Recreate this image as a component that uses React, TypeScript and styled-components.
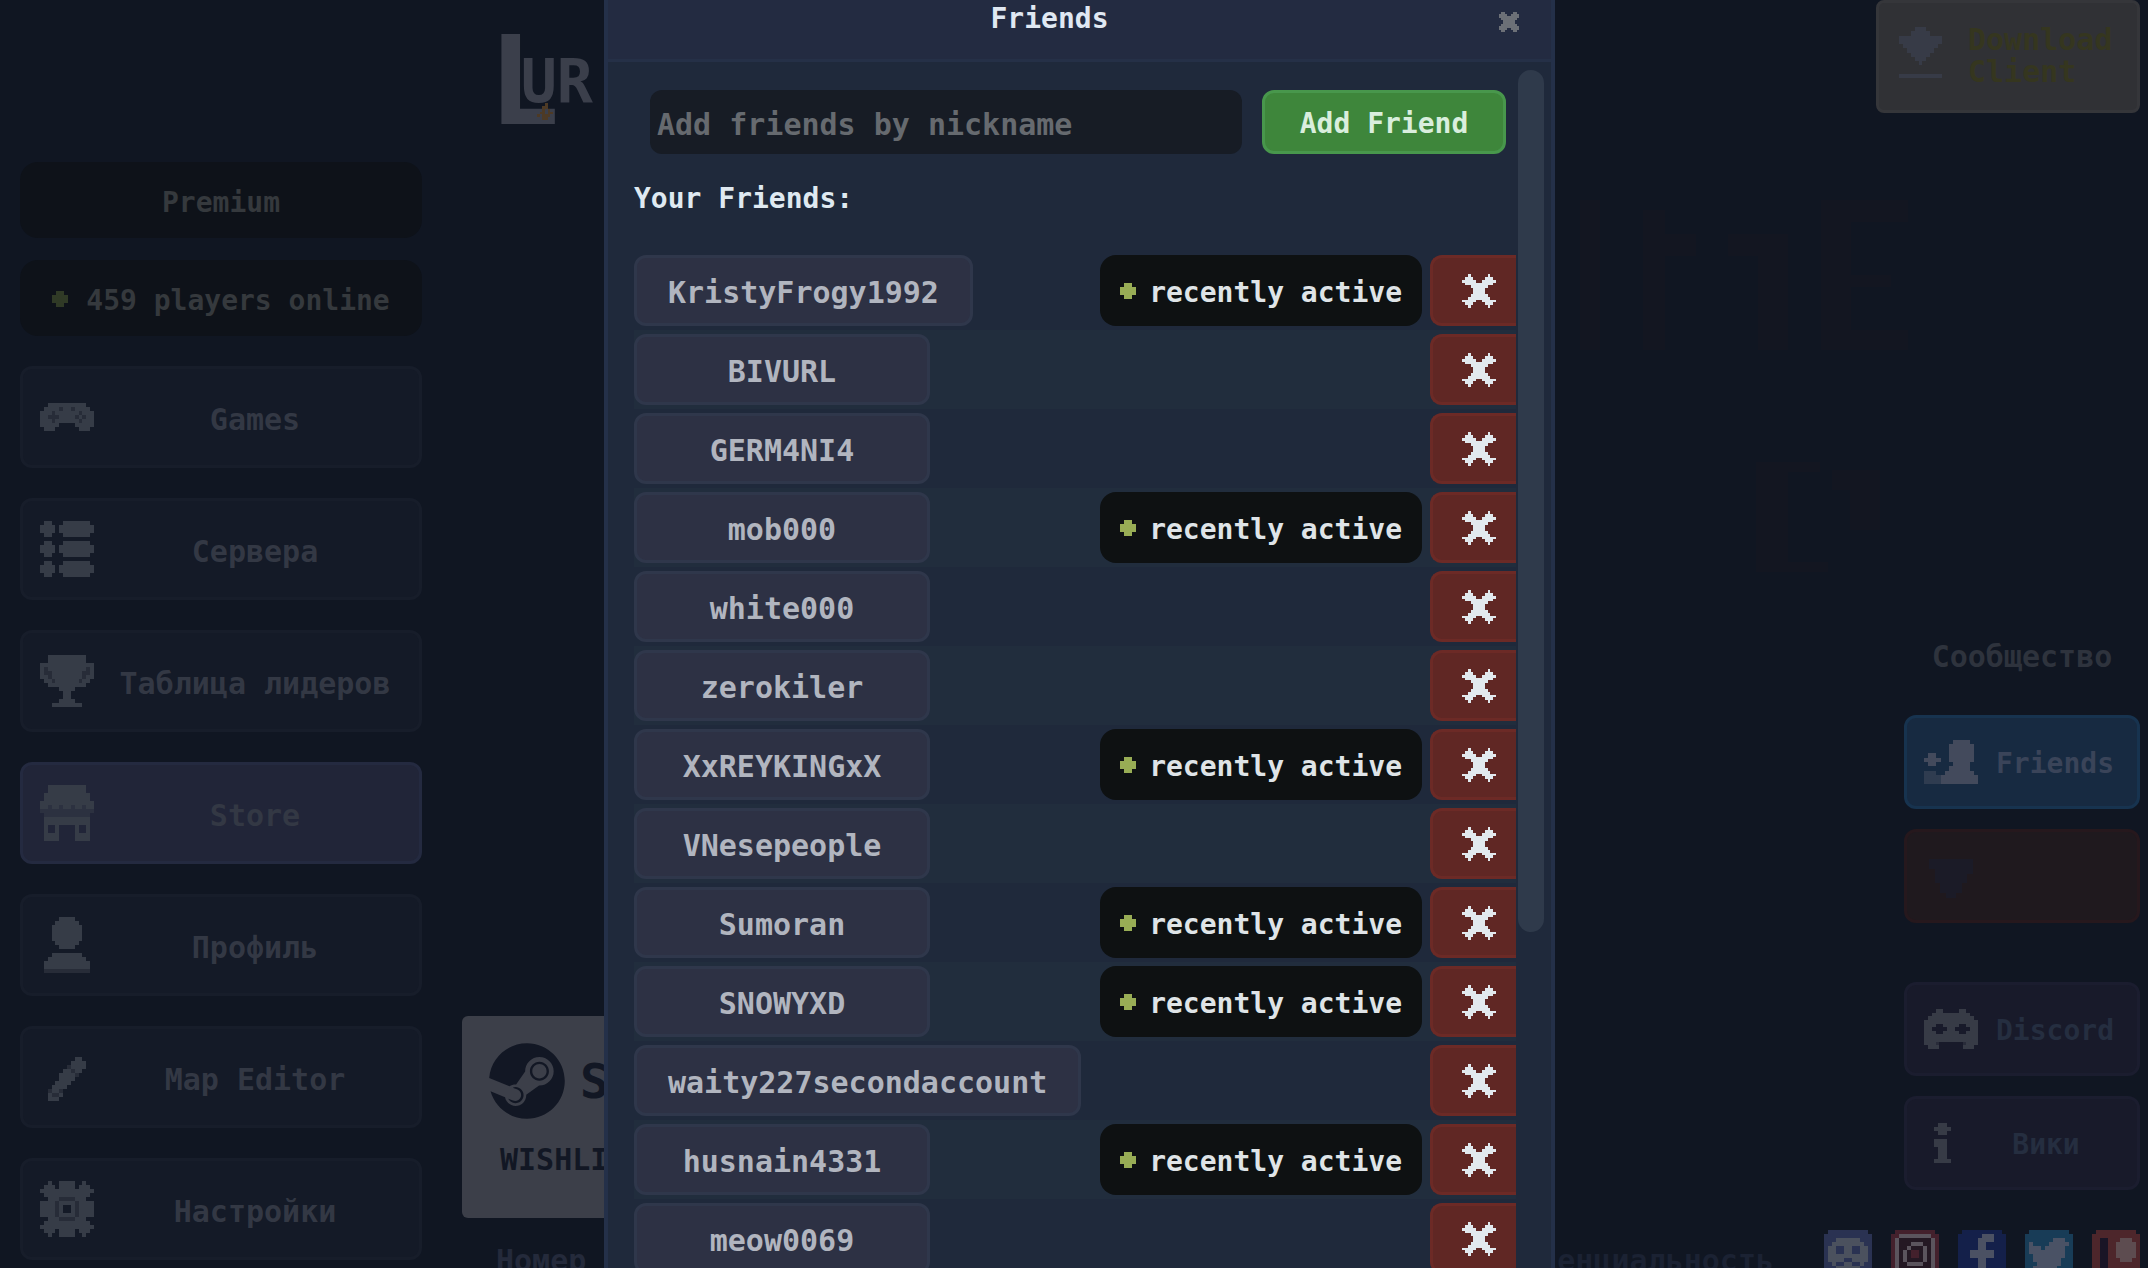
import React from "react";
import styled, { createGlobalStyle } from "styled-components";
import { FaSteam } from "react-icons/fa";

const Global = createGlobalStyle`
  * { box-sizing: border-box; }
  html, body { margin: 0; background: #101622; }
  body { overflow: hidden; }
  body, button, input {
    font-family: "DejaVu Sans Mono", "Liberation Mono", monospace;
    font-size: 30px;
    line-height: 36px;
    font-weight: 700;
  }
`;

/* ---------- pixel art ---------- */

const Svg = styled.svg`
  display: block;
  flex: none;
`;

type PixelProps = {
  art: string[];
  width: number;
  height: number;
  palette?: Record<string, string>;
};

function Pixel({ art, width, height, palette = {} }: PixelProps) {
  const cols = art[0].length;
  return (
    <Svg
      width={width}
      height={height}
      viewBox={`0 0 ${cols} ${art.length}`}
      preserveAspectRatio="none"
      shapeRendering="crispEdges"
      aria-hidden="true"
    >
      {art.flatMap((line, y) => {
        const runs: React.ReactNode[] = [];
        let x = 0;
        while (x < cols) {
          const c = line[x];
          let end = x + 1;
          while (end < cols && line[end] === c) end++;
          if (c !== "." && c !== undefined) {
            runs.push(
              <rect
                key={`${x}-${y}`}
                x={x}
                y={y}
                width={end - x}
                height={1}
                fill={palette[c] ?? "currentColor"}
                opacity={c === "o" ? 0.55 : 1}
              />
            );
          }
          x = end;
        }
        return runs;
      })}
    </Svg>
  );
}

const gamepad = [
  "..##########..",
  ".####o##o####.",
  "###o######o###",
  "##ooo####o#o##",
  "###o######o###",
  "#####....#####",
  ".###......###.",
];
const servers = [
  ".##...#######.",
  "####.#########",
  "####.#########",
  ".##...#######.",
  "..............",
  ".##...#######.",
  "####.#########",
  "####.#########",
  ".##...#######.",
  "..............",
  ".##...#######.",
  "####.#########",
  "####.#########",
  ".##...#######.",
];
const trophy = [
  "..##########..",
  "..##########..",
  "##############",
  "#o##########o#",
  "#oo########oo#",
  "##o########o##",
  ".##o######o##.",
  "..##########..",
  ".....####.....",
  "......##......",
  "......##......",
  ".....####.....",
  "...########...",
];
const store = [
  "..##########..",
  "..##########..",
  ".############.",
  ".############.",
  "##############",
  "##o##o##o##o##",
  "oooooooooooooo",
  ".oooooooooooo.",
  ".############.",
  ".############.",
  ".#..#....#..#.",
  ".#..#....#..#.",
  ".####....####.",
  ".####....####.",
];
const person = [
  ".....####.....",
  "....######....",
  "...########...",
  "...########...",
  "...########...",
  "...########...",
  "....######....",
  ".....####.....",
  "..............",
  "...########...",
  "..##########..",
  ".############.",
  ".############.",
  ".oooooooooooo.",
];
const pencil = [
  "..............",
  "..............",
  ".........##...",
  "........####..",
  ".......o####..",
  "......##o##...",
  ".....####o....",
  ".....####.....",
  "....####......",
  "...####.......",
  "..o##o........",
  "..#oo#........",
  "..###.........",
  "..............",
];
const gear = [
  "..#..####..#..",
  ".###.####.###.",
  "##############",
  ".############.",
  "..###oooo###..",
  "####o####o####",
  "####o#..#o####",
  "####o#..#o####",
  "####o####o####",
  "..###oooo###..",
  ".############.",
  "##############",
  ".###.####.###.",
  "..#..####..#..",
];
const cross = [
  "..#......#..",
  ".###....###.",
  "#####..#####",
  ".##########.",
  "...######...",
  "....####....",
  "....####....",
  "...######...",
  "..########..",
  "#####..#####",
  ".###....###.",
  "..#......#..",
];
const closeCross = [
  ".##....##.",
  "####..####",
  "##########",
  ".########.",
  "..######..",
  "..######..",
  ".########.",
  "##########",
  "####..####",
  ".##....##.",
];
const dot = [".##.", "####", "####", ".##."];
const download = [
  "....###....",
  "...#####...",
  "###########",
  "###########",
  ".#########.",
  "..#######..",
  "...#####...",
  "....###....",
  ".....#.....",
  "...........",
  "...........",
  "###########",
];
const friends = [
  ".......####..",
  "......######.",
  "......######.",
  ".##...######.",
  "####..######.",
  ".##....####..",
  "......#####..",
  "ooo..#######.",
  "oooo#########",
  "oooo#########",
];
const shield = [
  "..........",
  ".########.",
  ".########.",
  "..#######.",
  "..######..",
  "..######..",
  "...####...",
  "...####...",
  "....##....",
];
const discord = [
  "...##....##...",
  "..##########..",
  ".############.",
  "##############",
  "###..####..###",
  "##....##....##",
  "###..####..###",
  "##############",
  "##############",
  "###o......o###",
  ".###......###.",
];
const info = [".##.", "####", ".##.", "....", "###.", "###.", ".##.", ".##.", ".##.", "####"];
const flame = ["...#..", "..##..", "..#.#.", ".##.##", "#.###.", "..##.."];

const socials = [
  {
    name: "Discord Community",
    palette: { a: "#2a3252", b: "#4b515e" },
    art: [
      ".aaaaaaaaaa.", "aaaaaaaaaaaa", "aaabbbbbbaaa", "aabbbbbbbbaa", "abbaabbaabba", "abbaabbaabba",
      "abbbbbbbbbba", "abbbbaabbbba", "aabaabbaabaa", "aaabbbbbbaaa", "aaaaaaaaaaaa", ".aaaaaaaaaa.",
    ],
  },
  {
    name: "Instagram",
    palette: { a: "#43202c", b: "#5b545d", c: "#241823" },
    art: [
      ".aaaaaaaaaa.", "aabbbbbbbbaa", "abccccccccba", "abcccbbbccba", "abccbcccbcba", "abcbcaacbcba",
      "abcbcaacbcba", "abcbccccbcba", "abccbbbbccba", "abccccccccba", "aabbbbbbbbaa", ".aaaaaaaaaa.",
    ],
  },
  {
    name: "Facebook",
    palette: { a: "#14204a", b: "#4b5163" },
    art: [
      ".aaaaaaaaaa.", "aaaaaabbbaaa", "aaaaabbbbaaa", "aaaaabbaaaaa", "aaaaabbaaaaa", "aaabbbbbbaaa",
      "aaabbbbbbaaa", "aaaaabbaaaaa", "aaaaabbaaaaa", "aaaaabbaaaaa", "aaaaabbaaaaa", ".aaaabbaaaa.",
    ],
  },
  {
    name: "Twitter",
    palette: { a: "#183c57", b: "#4a5265" },
    art: [
      ".aaaaaaaaaa.", "aaaaaaaaaaaa", "aaaaaaabbbaa", "abaaaabbbbba", "abbbabbbbbaa", "abbbbbbbbbaa",
      "aabbbbbbbbaa", "aabbbbbbbaaa", "aaabbbbbbaaa", "aabbbbbbaaaa", "aaaaaaaaaaaa", ".aaaaaaaaaa.",
    ],
  },
  {
    name: "Patreon",
    palette: { a: "#4d262b", b: "#5d4c50", c: "#191526" },
    art: [
      ".aaaaaaaaaa.", "aaaaaaaaaaaa", "aaccaaabbbaa", "aaccaabbbbba", "aaccaabbbbba", "aaccaabbbbba",
      "aaccaabbbbba", "aaccaaabbbaa", "aaccaaaaaaaa", "aaccaaaaaaaa", "aaccaaaaaaaa", ".aaaaaaaaaa.",
    ],
  },
];

/* ---------- page ---------- */

const Page = styled.div`
  height: 100vh;
  overflow: hidden;
  display: grid;
  grid-template-columns: 402px 1fr 264px;
  column-gap: 40px;
  padding: 0 8px 0 20px;
  background: #101622;
`;

const Sidebar = styled.nav`
  display: flex;
  flex-direction: column;
  gap: 30px;
  padding-top: 162px;
`;

const Pills = styled.div`
  display: flex;
  flex-direction: column;
  gap: 22px;
`;

const Pill = styled.div`
  height: 76px;
  padding-top: 6px;
  border-radius: 18px;
  background: #0e1219;
  color: #35393d;
  display: flex;
  align-items: center;
  justify-content: center;
  gap: 18px;
  font-size: 28px;
`;

const OnlineDot = styled.span`
  padding-bottom: 4px;
  color: #303a26;
`;

const MenuButton = styled.button<{ $active?: boolean }>`
  flex: none;
  height: 102px;
  padding: 0 17px;
  border: 3px solid ${(p) => (p.$active ? "#242a40" : "#171d2a")};
  border-radius: 12px;
  background: ${(p) => (p.$active ? "#212538" : "#141a27")};
  color: #363c47;
  display: flex;
  align-items: center;
`;

const MenuText = styled.span`
  flex: 1;
  padding: 6px 0 0 14px;
  text-align: center;
  white-space: nowrap;
  color: #333844;
`;

const Main = styled.main`
  display: flex;
  flex-direction: column;
  justify-content: space-between;
  min-width: 0;
`;

const Logo = styled.h1`
  margin: 0;
  padding: 14px 0 0 30px;
  display: flex;
  align-items: flex-start;
  font-size: 60px;
  line-height: 60px;
  color: #3b3f4b;
`;

const LogoInitial = styled.span`
  font-family: Lato, "Liberation Sans", sans-serif;
  font-weight: 900;
  font-size: 124px;
  line-height: 124px;
`;

const LogoRest = styled.span`
  margin: 37px 0 0 -36px;
`;

const Flame = styled.span`
  margin: 89px 0 0 -56px;
  color: #4d3a25;
`;

const SteamCard = styled.a`
  width: 400px;
  max-width: 100%;
  height: 202px;
  padding: 26px 26px 0;
  border-radius: 6px;
  background: #3c3f49;
  color: #121724;
  text-decoration: none;
  display: flex;
  flex-direction: column;
  gap: 22px;
`;

const SteamRow = styled.span`
  display: flex;
  align-items: center;
  gap: 14px;
  font-size: 48px;
  line-height: 78px;
`;

const Wishlist = styled.span`
  padding-left: 12px;
`;

const Footer = styled.footer`
  height: 60px;
  padding: 25px 62px 0 34px;
  display: flex;
  justify-content: space-between;
  color: #242a3b;
`;

const FooterLink = styled.a`
  color: #1b2233;
  text-decoration: none;
`;

const Aside = styled.aside`
  min-height: calc(100vh + 10px);
  display: flex;
  flex-direction: column;
  align-items: flex-end;
`;

const DownloadButton = styled.button`
  width: 100%;
  height: 113px;
  padding: 0 20px 8px;
  border: 3px solid #35363a;
  border-radius: 8px;
  background: #303135;
  color: #373b47;
  display: flex;
  align-items: center;
  gap: 26px;
`;

const DownloadText = styled.span`
  display: flex;
  flex-direction: column;
  padding-top: 6px;
  color: #35361f;
  text-align: left;
  line-height: 32px;
`;

const Community = styled.section`
  width: 236px;
  margin-top: auto;
  display: flex;
  flex-direction: column;
  gap: 20px;
`;

const CommunityTitle = styled.h2`
  margin: 0;
  padding-bottom: 20px;
  text-align: center;
  font-size: 30px;
  color: #2e333d;
`;

const LinkButton = styled.button<{ $bg: string; $edge: string; $ink: string; $gap?: boolean }>`
  height: 94px;
  margin-top: ${(p) => (p.$gap ? "39px" : "0")};
  padding: 0 17px;
  border: 3px solid ${(p) => p.$edge};
  border-radius: 12px;
  background: ${(p) => p.$bg};
  color: ${(p) => p.$ink};
  display: flex;
  align-items: center;
  font-size: 28px;
`;

const IconSlot = styled.span<{ $color: string }>`
  flex: none;
  min-width: 36px;
  color: ${(p) => p.$color};
  display: flex;
  justify-content: center;
`;

const LinkText = styled.span`
  flex: 1;
  padding: 4px 0 0 12px;
  text-align: center;
`;

const Socials = styled.div`
  padding-top: 40px;
  display: flex;
  gap: 19px;
`;

const SocialLink = styled.a`
  display: block;
`;

const Backdrop = styled.div`
  position: absolute;
  left: 1560px;
  top: 190px;
  color: #131621;
`;

/* ---------- dialog ---------- */

const Overlay = styled.div`
  position: fixed;
  inset: 0;
  padding-left: 11px;
  display: flex;
  justify-content: center;
`;

const Dialog = styled.div`
  width: 951px;
  max-width: 100%;
  height: 100%;
  overflow: hidden;
  border: solid #243049;
  border-width: 0 4px;
  background: #1f293b;
  display: flex;
  flex-direction: column;
`;

const DialogHeader = styled.header`
  flex: none;
  height: 62px;
  padding: 0 32px 22px 0;
  border-bottom: 3px solid #253047;
  background: #232b41;
  display: flex;
  align-items: center;
`;

const DialogTitle = styled.h2`
  flex: 1;
  margin: 0;
  padding-right: 8px;
  text-align: center;
  font-size: 28px;
  color: #e0e8f2;
`;

const CloseButton = styled.button`
  padding: 6px 0 0;
  border: 0;
  background: none;
  color: #6c7077;
`;

const DialogBody = styled.div`
  flex: 1;
  min-height: 0;
  padding-right: 7px;
  display: flex;
  gap: 2px;
`;

const Content = styled.div`
  flex: 1;
  min-width: 0;
  padding: 28px 0 0 26px;
  overflow: hidden;
`;

const AddForm = styled.form`
  padding: 0 10px 0 16px;
  display: flex;
  gap: 20px;
`;

const NickInput = styled.input`
  flex: 1;
  min-width: 0;
  height: 64px;
  padding: 4px 7px 0;
  border: 0;
  border-radius: 12px;
  background: #171c25;
  color: #e0e8f2;
  outline: none;
  &::placeholder { color: #666a6f; opacity: 1; }
`;

const AddButton = styled.button`
  width: 244px;
  height: 64px;
  padding: 4px 0 0;
  border: 3px solid #48974c;
  border-radius: 12px;
  background: #3e863b;
  color: #d9eedd;
  font-size: 28px;
`;

const ListTitle = styled.h3`
  margin: 0;
  padding: 27px 0 34px;
  font-size: 28px;
  color: #dfe9f1;
`;

const List = styled.ul`
  margin: 0;
  padding: 0;
  list-style: none;
`;

const Row = styled.li`
  height: 79px;
  padding: 4px 0;
  display: flex;
  gap: 8px;
  &:nth-child(even) { background: #212d3d; }
`;

const NameButton = styled.button`
  min-width: 296px;
  margin-right: auto;
  padding: 4px 31px 0;
  border: 3px solid #2f374b;
  border-radius: 12px;
  background: #2d3144;
  color: #b1b5bf;
`;

const Status = styled.div`
  width: 322px;
  padding: 4px 20px 0;
  border-radius: 16px;
  background: #0e1112;
  color: #dfe4e7;
  display: flex;
  align-items: center;
  justify-content: space-between;
  font-size: 28px;
  white-space: nowrap;
`;

const StatusDot = styled.span`
  padding-bottom: 4px;
  color: #98ad55;
`;

const RemoveButton = styled.button`
  width: 86px;
  padding: 0 0 0 8px;
  border: 3px solid #6c2a26;
  border-right: 0;
  border-radius: 12px 0 0 12px;
  background: #602724;
  color: #e2e9ee;
  display: flex;
  align-items: center;
  justify-content: center;
`;

const ScrollThumb = styled.div`
  width: 26px;
  height: 68vh;
  margin-top: 8px;
  border-radius: 13px;
  background: #2f3a4b;
`;

const menu = [
  { label: "Games", art: gamepad, h: 28 },
  { label: "Сервера", art: servers, h: 56 },
  { label: "Таблица лидеров", art: trophy, h: 52 },
  { label: "Store", art: store, h: 56, active: true },
  { label: "Профиль", art: person, h: 56 },
  { label: "Map Editor", art: pencil, h: 56 },
  { label: "Настройки", art: gear, h: 56 },
];

const people = [
  { name: "KristyFrogy1992", active: true },
  { name: "BIVURL", active: false },
  { name: "GERM4NI4", active: false },
  { name: "mob000", active: true },
  { name: "white000", active: false },
  { name: "zerokiler", active: false },
  { name: "XxREYKINGxX", active: true },
  { name: "VNesepeople", active: false },
  { name: "Sumoran", active: true },
  { name: "SNOWYXD", active: true },
  { name: "waity227secondaccount", active: false },
  { name: "husnain4331", active: true },
  { name: "meow0069", active: false },
];

export default function App() {
  return (
    <>
      <Global />
      <Page>
        <Sidebar>
          <Pills>
            <Pill>Premium</Pill>
            <Pill>
              <OnlineDot>
                <Pixel art={dot} width={16} height={16} />
              </OnlineDot>
              459 players online
            </Pill>
          </Pills>
          {menu.map((m) => (
            <MenuButton key={m.label} type="button" $active={m.active}>
              <Pixel art={m.art} width={54} height={m.h} />
              <MenuText>{m.label}</MenuText>
            </MenuButton>
          ))}
        </Sidebar>

        <Main>
          <Logo>
            <LogoInitial>L</LogoInitial>
            <LogoRest>UR</LogoRest>
            <Flame>
              <Pixel art={flame} width={16} height={17} />
            </Flame>
          </Logo>
          <div>
            <SteamCard href="#steam">
              <SteamRow>
                <FaSteam size={78} />
                STEAM
              </SteamRow>
              <Wishlist>WISHLIST</Wishlist>
            </SteamCard>
            <Footer>
              <span>Номер</span>
              <FooterLink href="#privacy">Конфиденциальность</FooterLink>
            </Footer>
          </div>
        </Main>

        <Aside>
          <DownloadButton type="button">
            <Pixel art={download} width={43} height={51} />
            <DownloadText>
              <span>Download</span>
              <span>Client</span>
            </DownloadText>
          </DownloadButton>
          <Community>
            <CommunityTitle>Сообщество</CommunityTitle>
            <LinkButton type="button" $bg="#172a41" $edge="#17334f" $ink="#3a4459">
              <IconSlot $color="#434a5c">
                <Pixel art={friends} width={54} height={44} />
              </IconSlot>
              <LinkText>Friends</LinkText>
            </LinkButton>
            <LinkButton type="button" $bg="#1f191e" $edge="#26181d" $ink="#1f191e" aria-label="Support">
              <IconSlot $color="#1b1b27">
                <Pixel art={shield} width={54} height={44} />
              </IconSlot>
            </LinkButton>
            <LinkButton type="button" $bg="#181a2a" $edge="#1b1d2f" $ink="#252e40" $gap>
              <IconSlot $color="#373b46">
                <Pixel art={discord} width={54} height={40} />
              </IconSlot>
              <LinkText>Discord</LinkText>
            </LinkButton>
            <LinkButton type="button" $bg="#181a2a" $edge="#1b1d2f" $ink="#252e40">
              <IconSlot $color="#373b46">
                <Pixel art={info} width={17} height={40} />
              </IconSlot>
              <LinkText>Вики</LinkText>
            </LinkButton>
          </Community>
          <Socials>
            {socials.map((s) => (
              <SocialLink key={s.name} href="#social" aria-label={s.name}>
                <Pixel art={s.art} palette={s.palette} width={48} height={48} />
              </SocialLink>
            ))}
          </Socials>
        </Aside>
      </Page>

      <Backdrop>
        <Svg width="360" height="400" viewBox="0 0 360 400" fill="currentColor" aria-hidden="true">
          <path d="M20 10h20v150H20zM83 20h22v24h31v22h-31v94H83zM168 44h60v116h-30V66h-30zM261 10h87v22h-57v53h40v12h-40v43h57v20h-87z" />
          <path d="M196 272h64v10h-32v90h40v10h-72zM272 280h48v60h-30v-40h-18z" />
        </Svg>
      </Backdrop>

      <Overlay>
        <Dialog role="dialog" aria-label="Friends">
          <DialogHeader>
            <DialogTitle>Friends</DialogTitle>
            <CloseButton type="button" aria-label="Close">
              <Pixel art={closeCross} width={20} height={20} />
            </CloseButton>
          </DialogHeader>
          <DialogBody>
            <Content>
              <AddForm onSubmit={(e) => e.preventDefault()}>
                <NickInput placeholder="Add friends by nickname" aria-label="Add friends by nickname" />
                <AddButton type="submit">Add Friend</AddButton>
              </AddForm>
              <ListTitle>Your Friends:</ListTitle>
              <List>
                {people.map((p) => (
                  <Row key={p.name}>
                    <NameButton type="button">{p.name}</NameButton>
                    {p.active && (
                      <Status>
                        <StatusDot>
                          <Pixel art={dot} width={16} height={16} />
                        </StatusDot>
                        recently active
                      </Status>
                    )}
                    <RemoveButton type="button" aria-label={`Remove ${p.name}`}>
                      <Pixel art={cross} width={34} height={34} />
                    </RemoveButton>
                  </Row>
                ))}
              </List>
            </Content>
            <ScrollThumb />
          </DialogBody>
        </Dialog>
      </Overlay>
    </>
  );
}
